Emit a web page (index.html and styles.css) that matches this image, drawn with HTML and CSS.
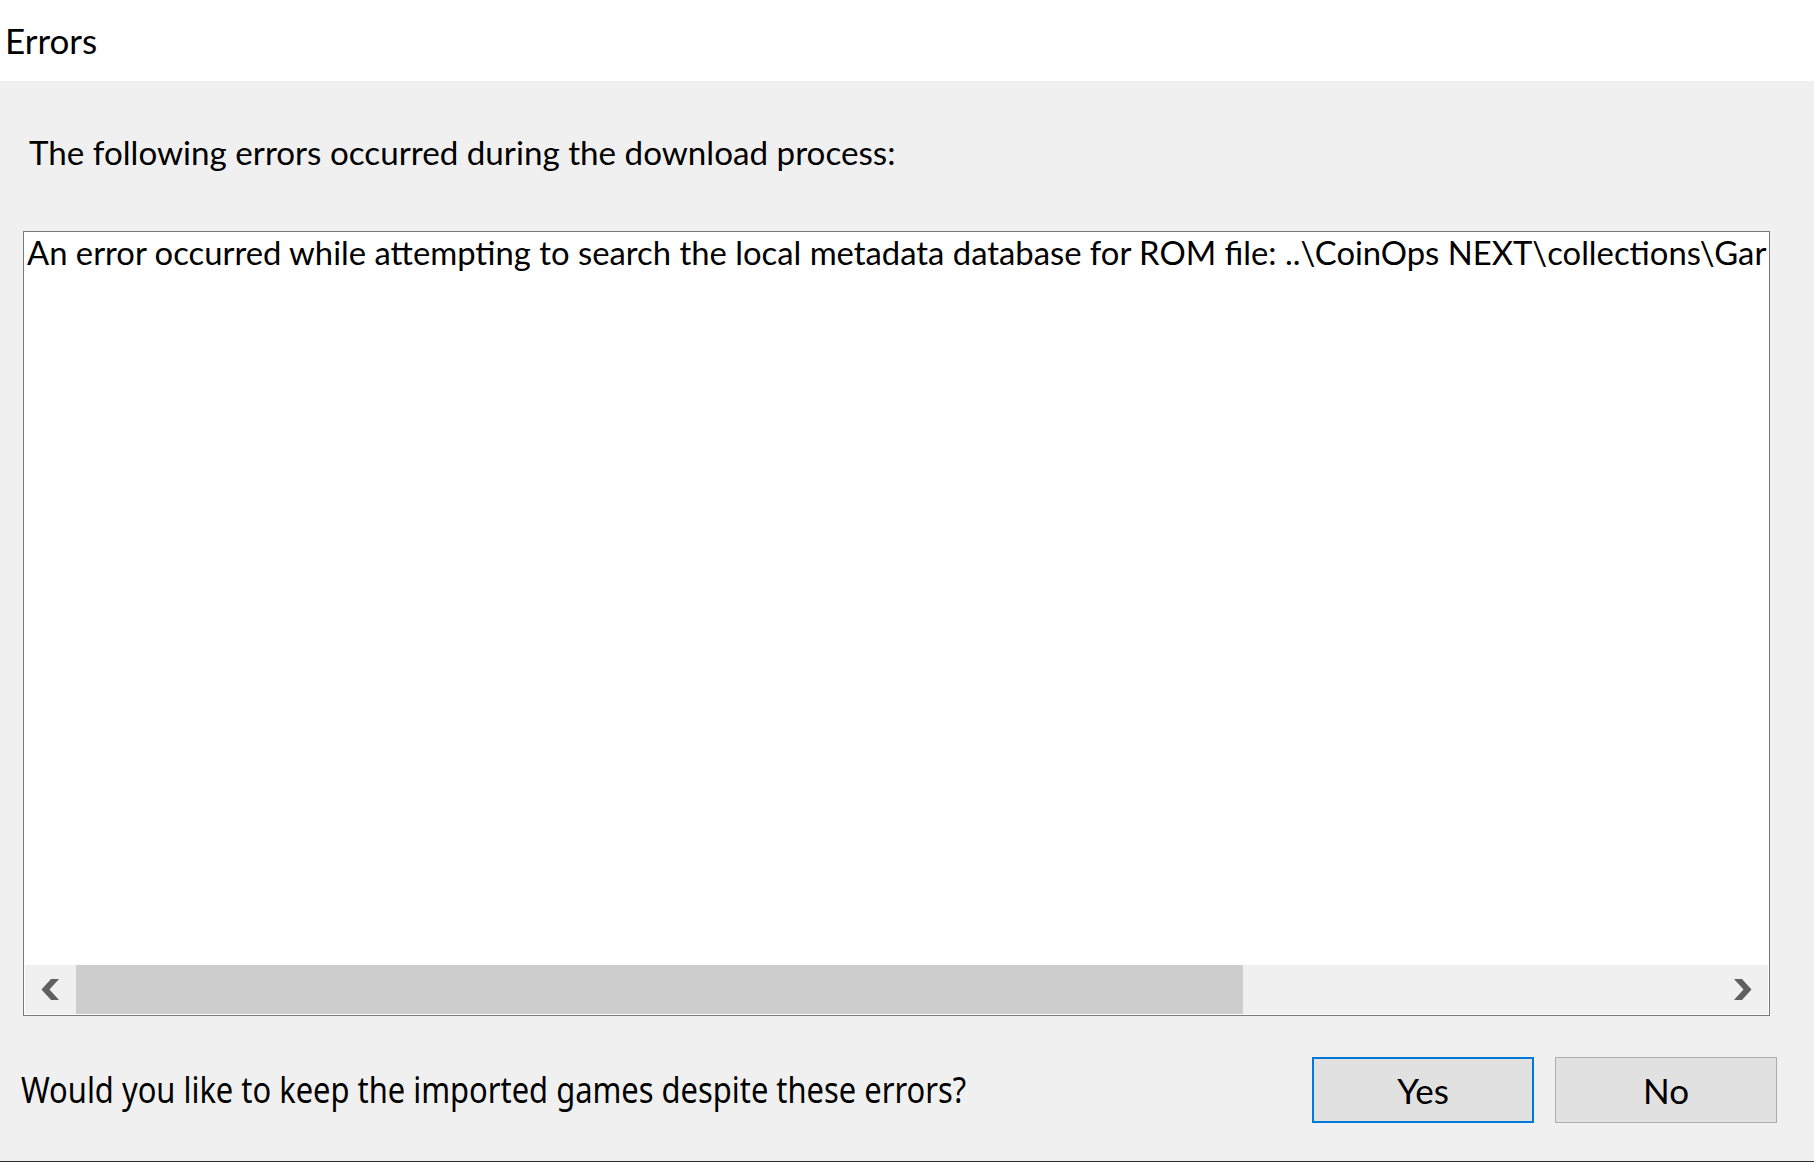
FILE: index.html
```html
<!DOCTYPE html>
<html lang="en">
<head>
<meta charset="utf-8">
<title>Errors</title>
<link rel="stylesheet" href="styles.css">
</head>
<body>
<div class="window">
  <div class="titlebar"><span class="title">Errors</span></div>
  <div class="content">
    <p class="label">The following errors occurred during the download process:</p>
    <div class="textbox">
      <div class="textarea"><span class="line">An error occurred while attempting to search the local metadata database for ROM file: ..\CoinOps NEXT\collections\Gar</span></div>
      <div class="hscroll">
        <div class="sbtn">
          <svg class="chev" width="19" height="21" viewBox="0 0 19 21"><polygon points="10,0 18,0 8.5,10.5 18,21 10,21 0.5,10.5" fill="#606060"/></svg>
        </div>
        <div class="track"><div class="thumb"></div></div>
        <div class="sbtn">
          <svg class="chev" width="19" height="21" viewBox="0 0 19 21"><polygon points="9,0 1,0 10.5,10.5 1,21 9,21 18.5,10.5" fill="#606060"/></svg>
        </div>
      </div>
    </div>
    <div class="footer">
      <p class="question"><span class="qtext">Would you like to keep the imported games despite these errors?</span></p>
      <div class="buttons">
        <button class="btn btn-default">Yes</button>
        <button class="btn">No</button>
      </div>
    </div>
  </div>
  <div class="edge"></div>
</div>
</body>
</html>
```
FILE: styles.css
```css
html, body {
  margin: 0;
  padding: 0;
}
body {
  background: #f0f0f0;
  font-family: "Lato", "Noto Sans", sans-serif;
  color: #000;
}
.window {
  height: 1162px;
  display: flex;
  flex-direction: column;
  overflow: hidden;
}
.titlebar {
  height: 81px;
  background: #ffffff;
  flex: none;
  padding-left: 5px;
  box-sizing: border-box;
}
.title {
  font-size: 35px;
  line-height: 80px;
}
.content {
  flex: 1;
  display: flex;
  flex-direction: column;
  padding: 46px 44px 0 23px;
}
.label {
  margin: 0 0 54px 6px;
  font-size: 33.2px;
  line-height: 50px;
  white-space: nowrap;
}
.textbox {
  height: 785px;
  box-sizing: border-box;
  border: 1px solid #7a7a7a;
  background: #ffffff;
  padding: 1px;
  display: flex;
  flex-direction: column;
}
.textarea {
  flex: 1;
  overflow: hidden;
  white-space: nowrap;
  padding: 2px 0 0 2px;
}
.line {
  font-size: 32.8px;
  line-height: 36px;
}
.hscroll {
  height: 49px;
  flex: none;
  display: flex;
  background: #f0f0f0;
}
.sbtn {
  width: 51px;
  flex: none;
  display: flex;
  align-items: center;
  justify-content: center;
}
.track {
  flex: 1;
  display: flex;
}
.thumb {
  width: 1167px;
  background: #cdcdcd;
}
.footer {
  display: flex;
  align-items: center;
  justify-content: space-between;
  margin: 41px -7px 0 -2px;
}
.question {
  margin: 0;
  font-family: "Noto Sans", sans-serif;
  font-size: 36px;
  line-height: 66px;
  white-space: nowrap;
}
.qtext {
  display: inline-block;
  transform: scaleX(0.858);
  transform-origin: left center;
}
.buttons {
  display: flex;
  gap: 21px;
}
.btn {
  width: 222px;
  height: 66px;
  box-sizing: border-box;
  background: #e1e1e1;
  border: 1px solid #adadad;
  font-family: "Lato", "Noto Sans", sans-serif;
  font-size: 35px;
  color: #000;
  padding: 0;
  margin: 0;
}
.btn-default {
  border: 2px solid #0078d7;
}
.edge {
  margin-top: auto;
  height: 1px;
  background: #2b2b2b;
  flex: none;
}
```
